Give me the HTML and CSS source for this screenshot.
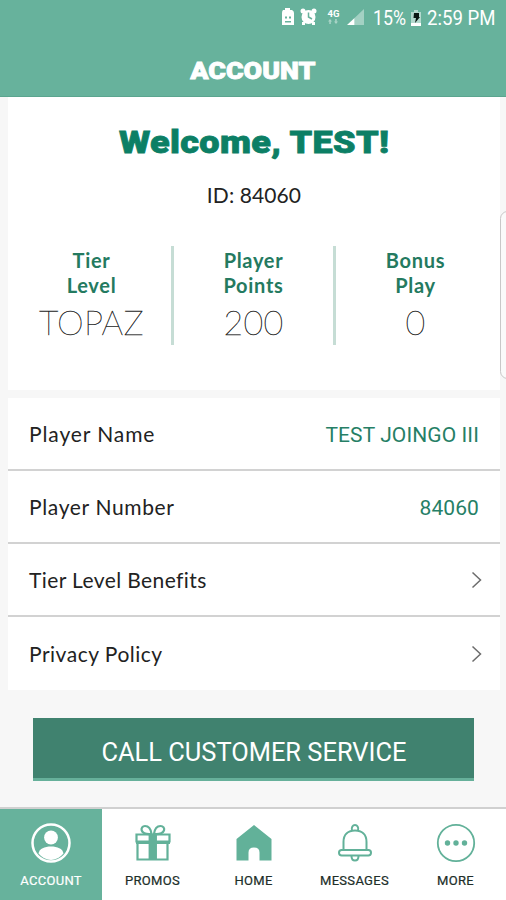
FILE: index.html
```html
<!DOCTYPE html>
<html lang="en">
<head>
<meta charset="utf-8">
<title>Account</title>
<link rel="stylesheet" href="styles.css">
</head>
<body>
<div class="app">
  <header class="header">
    <div class="status">
      <svg class="status-icons" width="96" height="24" viewBox="0 0 96 24" fill="#fff">
        <path fill-rule="evenodd" d="M4 3h2v-2h5v2h2q2 1 2 3v12h-12V6q0-2 1-3zM6 9.500h2v2H6zM10 9.500h2v2h-2zM6 14v1.500h6V14z"/>
        <circle cx="29.500" cy="10" r="7"/><circle cx="24" cy="4" r="2.500"/><circle cx="35" cy="4" r="2.500"/><path d="M23 15h3v3h-3zM33 15h3v3h-3z"/>
        <path d="M29.500 5.500V10l3.500 2" fill="none" stroke="#67b29c" stroke-width="1.500"/>
        <text class="network" x="48.500" y="9.500">4G</text>
        <path opacity=".45" d="M51 12l2 2.500h-1.200V17h-1.500v-2.500H49zM57 17l-2-2.500h1.200V12h1.500v2.500H59z"/>
        <path d="M68 18l7.500-7v7z"/><path opacity=".4" d="M75.500 11L85 2v16h-9.500z"/>
      </svg>
      <span class="percent">15%</span>
      <svg class="battery" width="12" height="18" viewBox="0 0 12 18"><path fill="#fff" opacity=".5" d="M1 3h3V1h4v2h3v11H1z"/><path fill="#fff" d="M1 14h10v3H1z"/><path fill="#0a1713" d="M4 4h5v4h1L5 14l1-5H3.500z"/></svg>
      <span class="clock">2:59 PM</span>
    </div>
    <h1 class="title"><span>ACCOUNT</span></h1>
  </header>
  <main class="content">
    <section class="card">
      <h2 class="welcome"><span>Welcome, TEST!</span></h2>
      <p class="player-id">ID: 84060</p>
      <div class="stats">
        <div class="stat"><div class="label">Tier<br>Level</div><div class="value">TOPAZ</div></div>
        <div class="stat"><div class="label">Player<br>Points</div><div class="value">200</div></div>
        <div class="stat"><div class="label">Bonus<br>Play</div><div class="value">0</div></div>
      </div>
    </section>
    <section class="list">
      <div class="row"><span class="r1">Player Name</span><span class="info">TEST JOINGO III</span></div>
      <div class="row"><span class="r2">Player Number</span><span class="info">84060</span></div>
      <div class="row"><span class="r3">Tier Level Benefits</span><svg width="12" height="18" viewBox="0 0 12 18"><path d="M1.500 1.500L9.500 9l-8 7.500"/></svg></div>
      <div class="row"><span class="r4">Privacy Policy</span><svg width="12" height="18" viewBox="0 0 12 18"><path d="M1.500 1.500L9.500 9l-8 7.500"/></svg></div>
    </section>
    <button class="call"><span>CALL CUSTOMER SERVICE</span></button>
    <div class="edge"></div>
  </main>
  <nav class="tabs">
    <div class="tab active">
      <svg width="42" height="42" viewBox="0 0 42 42"><circle cx="21" cy="21" r="18.500" fill="none" stroke="#fff" stroke-width="2.500"/><circle cx="21" cy="15.500" r="6.900" fill="#fff"/><path fill="#fff" d="M8.500 31.500c1-5 6-7 12.500-7s11.500 2 12.500 7Q28 38 21 38T8.500 31.500z"/></svg>
      <span>ACCOUNT</span>
    </div>
    <div class="tab">
      <svg width="42" height="42" viewBox="0 0 42 42" fill="none" stroke="#62b199" stroke-width="2.200"><path d="M5.500 20.500v17h30v-17M4.500 12.500h33v7h-33z"/><path d="M17.700 12.500v25M23.800 12.500v25"/><path d="M19.500 12C7 13 8 4 13 4c4 0 6 4 6.500 8zM22 12c12.500 1 12-8 6.500-8-4 0-6 4-6.500 8z"/><path fill="#62b199" stroke="none" d="M17 12h7.500v26H17zM4 19h34v3H4z"/></svg>
      <span>PROMOS</span>
    </div>
    <div class="tab">
      <svg width="42" height="42" viewBox="0 0 42 42"><path fill="#62b199" d="M3.500 17L21 3l17.500 14v21.500h-12v-8q0-5-5.500-5t-5.500 5v8h-12z"/></svg>
      <span>HOME</span>
    </div>
    <div class="tab">
      <svg width="42" height="42" viewBox="0 0 42 42" fill="none" stroke="#62b199" stroke-width="2"><path d="M9.500 28V20c0-8 5-11.500 11.500-11.500S32.500 12 32.500 20v8"/><path d="M18 9c-2-8 8-8 6 0"/><rect x="5" y="28" width="32" height="5.500" rx="2.700"/><path d="M17.500 34c0 6 7 6 7 0"/></svg>
      <span>MESSAGES</span>
    </div>
    <div class="tab">
      <svg width="42" height="42" viewBox="0 0 42 42"><circle cx="21" cy="21" r="18.200" fill="none" stroke="#62b199" stroke-width="1.800"/><g fill="#62b199"><circle cx="12.500" cy="21" r="2.700"/><circle cx="21" cy="21" r="2.700"/><circle cx="29.500" cy="21" r="2.700"/></g></svg>
      <span>MORE</span>
    </div>
  </nav>
</div>
</body>
</html>
```

FILE: styles.css
```css
* { box-sizing: border-box; }
body { margin: 0; background: #f7f7f7; font-family: Lato, sans-serif; color: #222; }
h1, h2, p { margin: 0; }
svg { display: block; flex: none; }
.app { height: 900px; display: flex; flex-direction: column; overflow: hidden; }
.header { height: 97px; background: #67b29c; color: #fff; border-bottom: 1px solid #5ba58f; }
.status { height: 36px; display: flex; align-items: center; justify-content: flex-end; padding-right: 10px; font: 20px/36px Roboto, sans-serif; }
.status-icons { margin: 1px -2px 0 0; }
.percent { width: 33px; transform: scaleX(.89); transform-origin: left; white-space: nowrap; }
.network { font: bold 9.500px Roboto, sans-serif; }
.battery { margin: 0 5px 0 4px; }
.clock { width: 69px; transform: scaleX(.93); transform-origin: left; white-space: nowrap; }
.title { text-align: center; font: 900 24px/70px Roboto, sans-serif; }
.title span { display: inline-block; -webkit-text-stroke: .8px #fff; transform: scaleX(1.12); }
.content { position: relative; flex: 1; padding: 0 6px 0 8px; }
.card { height: 293px; background: #fff; text-align: center; padding-top: 24px; }
.welcome { font: 900 32px/42px Roboto, sans-serif; color: #0c7f65; }
.welcome span { display: inline-block; -webkit-text-stroke: .8px #0c7f65; letter-spacing: .3px; transform: scaleX(1.125); }
.player-id { margin-top: 21px; font-size: 21px; line-height: 22px; letter-spacing: .1px; }
.stats { display: grid; grid-template-columns: 162px 162px 162px; justify-content: start; padding-left: 4px; margin-top: 40px; }
.stat { height: 99px; border-right: 3px solid #c6ddd5; padding: 2px 0 0; }
.stat:last-child { border-color: transparent; }
.label { color: #247a60; font-size: 20px; line-height: 25px; font-weight: 700; letter-spacing: .7px; }
.value { font-size: 34px; line-height: 48px; font-weight: 100; letter-spacing: .3px; color: #222; -webkit-text-stroke: .35px #222; }
.list { margin-top: 8px; background: #fff; height: 292px; }
.row { height: 73px; padding: 0 17px 0 21px; display: flex; align-items: center; justify-content: space-between; border-bottom: 2px solid #d2d2d2; font-size: 21px; }
.row:last-child { border-bottom: 0; }
.row svg { fill: none; stroke: #6c6c6c; stroke-width: 1.500; }
.r1 { letter-spacing: .9px; }
.r2 { letter-spacing: .65px; }
.r3 { letter-spacing: .4px; }
.r4 { letter-spacing: .5px; }
.info { font: 21px/24px Roboto, sans-serif; color: #267f66; margin-right: 4px; padding-top: 3px; letter-spacing: .1px; }
.call { display: block; width: 441px; height: 63px; margin: 28px 0 0 25px; padding: 7px 0 0; border: 0; border-bottom: 3px solid #66b09a; background: #40826f; color: #fff; font: 26px Roboto, sans-serif; }
.call span { display: inline-block; white-space: nowrap; transform: scaleX(.978); }
.edge { position: absolute; right: -9px; top: 114px; width: 15px; height: 168px; border: 1px solid #c8c8c8; border-radius: 8px; background: #fafafa; }
.tabs { height: 93px; border-top: 2px solid #d0d0d0; background: #fff; display: grid; grid-template-columns: 102px repeat(4, 1fr); }
.tab { display: flex; flex-direction: column; align-items: center; padding-top: 13px; font: 13px/16px Roboto, sans-serif; color: #202e29; }
.tab span { margin-top: 9px; -webkit-text-stroke: .2px; letter-spacing: .3px; }
.active { background: #67b29c; color: #fff; }
```
